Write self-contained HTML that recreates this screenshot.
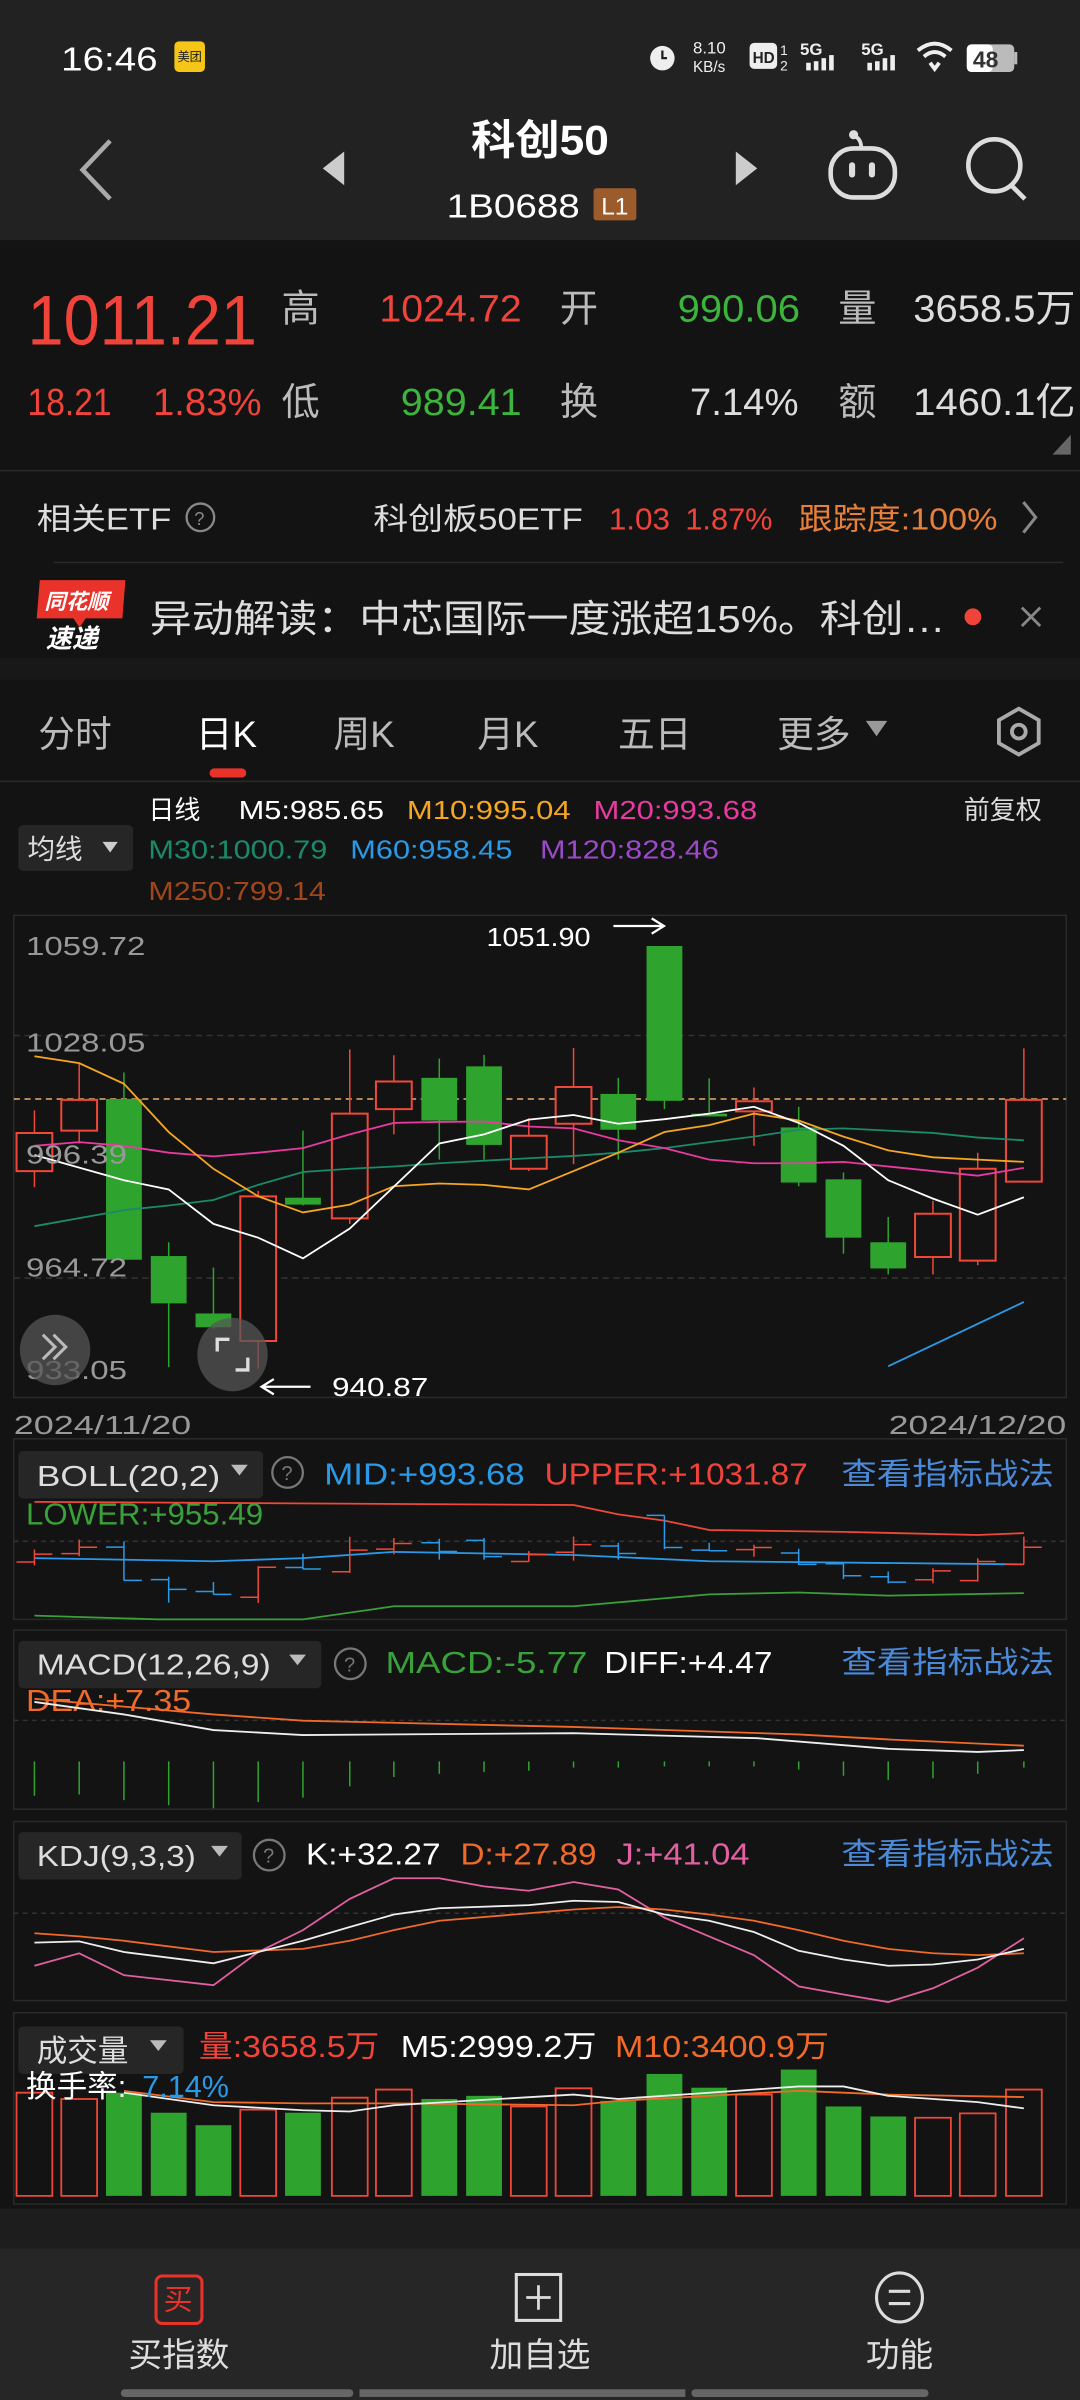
<!DOCTYPE html>
<html><head><meta charset="utf-8"><style>
html,body{margin:0;padding:0;background:#121212;}
svg{display:block}
text{font-family:"Liberation Sans","Noto Sans CJK SC",sans-serif;}
</style></head><body>
<svg width="1080" height="2400" viewBox="0 0 706 1568" preserveAspectRatio="none" xmlns="http://www.w3.org/2000/svg">
<rect x="0" y="0" width="706" height="157" fill="#222222"/>
<rect x="0" y="157" width="706" height="1290" fill="#131313"/>
<rect x="0" y="430" width="706" height="14" fill="#181818"/>
<rect x="0" y="1443" width="706" height="26" fill="#1d1d1d"/>
<rect x="0" y="1469" width="706" height="99" fill="#262626"/>

<text x="40" y="46" font-size="22" fill="#fff" textLength="63" lengthAdjust="spacingAndGlyphs">16:46</text>
<rect x="114" y="27" width="20" height="20" rx="3" fill="#f5c518"/>
<text x="116" y="40" font-size="8" fill="#222">美团</text>
<circle cx="433" cy="38" r="8" fill="#eee"/><path d="M433 33v5h3" stroke="#222" stroke-width="1.5" fill="none"/>
<text x="453" y="35" font-size="11" fill="#eee">8.10</text>
<text x="453" y="47" font-size="10" fill="#eee">KB/s</text>
<rect x="490" y="28" width="18" height="17" rx="3" fill="#eee"/><text x="492" y="41" font-size="10" fill="#222" font-weight="bold">HD</text>
<text x="510" y="36" font-size="9" fill="#eee">1</text><text x="510" y="46" font-size="9" fill="#eee">2</text>
<text x="523" y="36" font-size="11" fill="#eee" font-weight="bold">5G</text>
<g fill="#eee"><rect x="527" y="41" width="3" height="5"/><rect x="532" y="40" width="3" height="6"/><rect x="537" y="38" width="3" height="8"/><rect x="542" y="36" width="3" height="10"/></g>
<text x="563" y="36" font-size="11" fill="#eee" font-weight="bold">5G</text>
<g fill="#eee"><rect x="567" y="41" width="3" height="5"/><rect x="572" y="40" width="3" height="6"/><rect x="577" y="38" width="3" height="8"/><rect x="582" y="36" width="3" height="10"/></g>
<path d="M600 33 Q611 24 622 33 M604 37 Q611 31 618 37 M608 41 L611 45 L614 41" stroke="#eee" stroke-width="2.5" fill="none"/>
<rect x="632" y="29" width="31" height="18" rx="3" fill="#bbb"/><rect x="632" y="29" width="17" height="18" rx="3" fill="#fff"/><rect x="663" y="34" width="2" height="8" fill="#bbb"/>
<text x="636" y="44" font-size="15" fill="#333" font-weight="bold">48</text>

<path d="M72 92 L54 111 L72 130" stroke="#aaa" stroke-width="3" fill="none"/>
<path d="M225 99 L211 110 L225 121 Z" fill="#ccc"/>
<path d="M481 99 L495 110 L481 121 Z" fill="#ccc"/>
<text x="353" y="101" font-size="27" fill="#fff" text-anchor="middle" font-weight="bold" textLength="90" lengthAdjust="spacingAndGlyphs">科创50</text>
<text x="292" y="142" font-size="22" fill="#fff" textLength="87" lengthAdjust="spacingAndGlyphs">1B0688</text>
<rect x="388" y="123" width="28" height="21" rx="2" fill="#9c5b2a"/>
<text x="393" y="140" font-size="16" fill="#fff">L1</text>
<rect x="543" y="97" width="42" height="32" rx="15" fill="none" stroke="#ddd" stroke-width="3"/>
<rect x="555" y="106" width="4" height="10" rx="2" fill="#ddd"/><rect x="568" y="106" width="4" height="10" rx="2" fill="#ddd"/>
<path d="M563 97 Q563 91 559 89" stroke="#ddd" stroke-width="2.5" fill="none"/><circle cx="558" cy="88" r="3" fill="#ddd"/>
<circle cx="650" cy="108" r="17" fill="none" stroke="#ddd" stroke-width="3"/><path d="M661 121 L670 130" stroke="#ddd" stroke-width="3"/>

<text x="18" y="225" font-size="46" fill="#f0433a" textLength="150" lengthAdjust="spacingAndGlyphs">1011.21</text>
<g font-size="25">
<text x="184" y="210" fill="#bbb">高</text>
<text x="248" y="210" fill="#f0433a" textLength="93" lengthAdjust="spacingAndGlyphs">1024.72</text>
<text x="366" y="210" fill="#bbb">开</text>
<text x="443" y="210" fill="#3cb53c" textLength="80" lengthAdjust="spacingAndGlyphs">990.06</text>
<text x="548" y="210" fill="#bbb">量</text>
<text x="597" y="210" fill="#ddd" textLength="106" lengthAdjust="spacingAndGlyphs">3658.5万</text>
<text x="18" y="271" fill="#f0433a" textLength="55" lengthAdjust="spacingAndGlyphs">18.21</text>
<text x="100" y="271" fill="#f0433a" textLength="71" lengthAdjust="spacingAndGlyphs">1.83%</text>
<text x="184" y="271" fill="#bbb">低</text>
<text x="262" y="271" fill="#3cb53c" textLength="79" lengthAdjust="spacingAndGlyphs">989.41</text>
<text x="366" y="271" fill="#bbb">换</text>
<text x="451" y="271" fill="#ddd" textLength="71" lengthAdjust="spacingAndGlyphs">7.14%</text>
<text x="548" y="271" fill="#bbb">额</text>
<text x="597" y="271" fill="#ddd" textLength="106" lengthAdjust="spacingAndGlyphs">1460.1亿</text>
</g>
<path d="M700 284 L700 297 L688 297 Z" fill="#666"/>
<rect x="0" y="307" width="706" height="1" fill="#2a2a2a"/>
<text x="24" y="346" font-size="20" fill="#ddd" textLength="88" lengthAdjust="spacingAndGlyphs">相关ETF</text>
<circle cx="131" cy="338" r="9" fill="none" stroke="#888" stroke-width="1.5"/><text x="127" y="343" font-size="12" fill="#888">?</text>
<text x="244" y="346" font-size="20" fill="#ddd" textLength="137" lengthAdjust="spacingAndGlyphs">科创板50ETF</text>
<text x="398" y="346" font-size="20" fill="#f0433a" textLength="40" lengthAdjust="spacingAndGlyphs">1.03</text>
<text x="448" y="346" font-size="20" fill="#f0433a" textLength="57" lengthAdjust="spacingAndGlyphs">1.87%</text>
<text x="522" y="346" font-size="20" fill="#e6803a" textLength="130" lengthAdjust="spacingAndGlyphs">跟踪度:100%</text>
<path d="M669 328 L677 338 L669 348" stroke="#888" stroke-width="2" fill="none"/>
<rect x="35" y="367" width="660" height="1" fill="#2a2a2a"/>
<path d="M26 379 L82 379 L80 404 L56 404 L52 410 L48 404 L24 404 Z" fill="#e8322a"/>
<text x="29" y="398" font-size="14" fill="#fff" font-style="italic" font-weight="bold">同花顺</text>
<text x="30" y="423" font-size="17" fill="#fff" font-style="italic" font-weight="bold">速递</text>
<text x="98" y="413" font-size="25" fill="#ddd" textLength="520" lengthAdjust="spacingAndGlyphs">异动解读：中芯国际一度涨超15%。科创…</text>
<circle cx="636" cy="403" r="5.5" fill="#f0433a"/>
<path d="M668 397 L680 409 M680 397 L668 409" stroke="#888" stroke-width="1.8"/>

<g font-size="24" fill="#bbb">
<text x="25" y="488">分时</text>
<text x="128" y="488" fill="#fff">日K</text>
<text x="218" y="488">周K</text>
<text x="312" y="488">月K</text>
<text x="404" y="488">五日</text>
<text x="508" y="488">更多</text>
</g>
<path d="M566 471 L580 471 L573 481 Z" fill="#999"/>
<rect x="137" y="502" width="24" height="6" rx="3" fill="#e8322a"/>
<path d="M666 463 L679 470.5 L679 485.5 L666 493 L653 485.5 L653 470.5 Z" fill="none" stroke="#aaa" stroke-width="2.5"/>
<circle cx="666" cy="478" r="4.5" fill="none" stroke="#aaa" stroke-width="2.5"/>
<rect x="0" y="510" width="706" height="1" fill="#2a2a2a"/>

<g font-size="17">
<text x="97" y="535" fill="#fff">日线</text>
<text x="156" y="535" fill="#fff" textLength="95" lengthAdjust="spacingAndGlyphs">M5:985.65</text>
<text x="266" y="535" fill="#f5a623" textLength="107" lengthAdjust="spacingAndGlyphs">M10:995.04</text>
<text x="388" y="535" fill="#e83aa0" textLength="107" lengthAdjust="spacingAndGlyphs">M20:993.68</text>
<text x="630" y="535" fill="#ddd">前复权</text>
<text x="97" y="561" fill="#1a8a6a" textLength="117" lengthAdjust="spacingAndGlyphs">M30:1000.79</text>
<text x="229" y="561" fill="#2a9ae8" textLength="106" lengthAdjust="spacingAndGlyphs">M60:958.45</text>
<text x="353" y="561" fill="#9a4ac8" textLength="117" lengthAdjust="spacingAndGlyphs">M120:828.46</text>
<text x="97" y="588" fill="#a0461a" textLength="116" lengthAdjust="spacingAndGlyphs">M250:799.14</text>
</g>
<rect x="12" y="539" width="75" height="30" rx="3" fill="#262626"/>
<text x="18" y="561" font-size="18" fill="#ddd">均线</text>
<path d="M67 550 L77 550 L72 557 Z" fill="#ccc"/>

<rect x="9" y="598" width="688" height="315" fill="none" stroke="#2a2a2a" stroke-width="1"/>
<line x1="9" y1="676.5" x2="697" y2="676.5" stroke="#333" stroke-dasharray="4 3"/>
<line x1="9" y1="835" x2="697" y2="835" stroke="#333" stroke-dasharray="4 3"/>
<line x1="9" y1="718" x2="697" y2="718" stroke="#e8b070" stroke-dasharray="4 3" stroke-width="1"/>
<g transform="matrix(0.4501 0 0 0.3001 0 457.5)">
<g stroke="#f04838" stroke-width="1.5">
<line x1="50" y1="893" x2="50" y2="1060" vector-effect="non-scaling-stroke"/>
<line x1="115" y1="790" x2="115" y2="965" vector-effect="non-scaling-stroke"/>
<line x1="375" y1="1068" x2="375" y2="1455" vector-effect="non-scaling-stroke"/>
<line x1="508" y1="760" x2="508" y2="1140" vector-effect="non-scaling-stroke"/>
<line x1="572" y1="773" x2="572" y2="945" vector-effect="non-scaling-stroke"/>
<line x1="768" y1="910" x2="768" y2="1025" vector-effect="non-scaling-stroke"/>
<line x1="833" y1="757" x2="833" y2="1010" vector-effect="non-scaling-stroke"/>
<line x1="1095" y1="843" x2="1095" y2="970" vector-effect="non-scaling-stroke"/>
<line x1="1355" y1="1090" x2="1355" y2="1250" vector-effect="non-scaling-stroke"/>
<line x1="1420" y1="985" x2="1420" y2="1230" vector-effect="non-scaling-stroke"/>
<line x1="1487" y1="758" x2="1487" y2="1050" vector-effect="non-scaling-stroke"/>
</g>
<g stroke="#2ea32e" stroke-width="1.5">
<line x1="180" y1="810" x2="180" y2="1220" vector-effect="non-scaling-stroke"/>
<line x1="245" y1="1180" x2="245" y2="1452" vector-effect="non-scaling-stroke"/>
<line x1="310" y1="1235" x2="310" y2="1368" vector-effect="non-scaling-stroke"/>
<line x1="440" y1="937" x2="440" y2="1100" vector-effect="non-scaling-stroke"/>
<line x1="638" y1="780" x2="638" y2="1000" vector-effect="non-scaling-stroke"/>
<line x1="703" y1="772" x2="703" y2="1000" vector-effect="non-scaling-stroke"/>
<line x1="898" y1="822" x2="898" y2="1000" vector-effect="non-scaling-stroke"/>
<line x1="965" y1="535" x2="965" y2="890" vector-effect="non-scaling-stroke"/>
<line x1="1030" y1="823" x2="1030" y2="906" vector-effect="non-scaling-stroke"/>
<line x1="1160" y1="885" x2="1160" y2="1058" vector-effect="non-scaling-stroke"/>
<line x1="1225" y1="1028" x2="1225" y2="1205" vector-effect="non-scaling-stroke"/>
<line x1="1290" y1="1125" x2="1290" y2="1250" vector-effect="non-scaling-stroke"/>
</g>
<g fill="#131313" stroke="#f04838" stroke-width="2">
<rect x="24" y="942" width="52" height="83" vector-effect="non-scaling-stroke"/>
<rect x="89" y="870" width="52" height="67" vector-effect="non-scaling-stroke"/>
<rect x="349" y="1080" width="52" height="315" vector-effect="non-scaling-stroke"/>
<rect x="482" y="900" width="52" height="228" vector-effect="non-scaling-stroke"/>
<rect x="546" y="830" width="52" height="60" vector-effect="non-scaling-stroke"/>
<rect x="742" y="948" width="52" height="72" vector-effect="non-scaling-stroke"/>
<rect x="807" y="842" width="52" height="80" vector-effect="non-scaling-stroke"/>
<rect x="1069" y="873" width="52" height="22" vector-effect="non-scaling-stroke"/>
<rect x="1329" y="1118" width="52" height="94" vector-effect="non-scaling-stroke"/>
<rect x="1394" y="1020" width="52" height="200" vector-effect="non-scaling-stroke"/>
<rect x="1461" y="870" width="52" height="178" vector-effect="non-scaling-stroke"/>
</g>
<g fill="#2ea32e">
<rect x="154" y="868" width="52" height="350"/>
<rect x="219" y="1210" width="52" height="103"/>
<rect x="284" y="1335" width="52" height="30"/>
<rect x="414" y="1083" width="52" height="15"/>
<rect x="612" y="822" width="52" height="93"/>
<rect x="677" y="797" width="52" height="171"/>
<rect x="872" y="857" width="52" height="78"/>
<rect x="939" y="535" width="52" height="337"/>
<rect x="1004" y="900" width="52" height="6"/>
<rect x="1134" y="930" width="52" height="120"/>
<rect x="1199" y="1043" width="52" height="127"/>
<rect x="1264" y="1180" width="52" height="57"/>
</g>
<g fill="none" stroke-width="1.8">
<polyline vector-effect="non-scaling-stroke" stroke="#1a8a6a" points="50,1145 180,1110 245,1100 310,1088 375,1055 440,1027 508,1020 572,1015 638,1008 768,997 833,992 898,985 965,975 1030,962 1095,950 1160,935 1225,932 1290,937 1355,942 1420,952 1487,958"/>
<polyline vector-effect="non-scaling-stroke" stroke="#e83aa0" points="50,970 115,962 180,970 245,985 310,993 375,985 440,975 508,945 572,920 638,918 703,917 768,928 833,932 898,958 965,975 1030,1000 1095,1008 1160,1008 1225,1005 1290,1015 1355,1025 1420,1035 1487,1018"/>
<polyline vector-effect="non-scaling-stroke" stroke="#f5a623" points="50,775 115,790 180,835 245,940 310,1020 375,1080 440,1115 508,1098 572,1058 638,1052 703,1055 768,1065 833,1025 898,985 965,940 1030,925 1095,900 1160,915 1225,950 1290,980 1355,995 1420,1000 1487,1005"/>
<polyline vector-effect="non-scaling-stroke" stroke="#ffffff" points="50,990 180,1045 245,1065 310,1140 375,1170 440,1215 508,1150 638,965 703,945 768,913 833,903 898,922 965,912 1030,900 1095,885 1160,920 1225,970 1290,1045 1355,1085 1420,1120 1487,1082"/>
<polyline vector-effect="non-scaling-stroke" stroke="#2a9ae8" points="1290,1450 1487,1310"/>
</g>
</g>
<g font-size="17" fill="#999">
<text x="17" y="624" textLength="78" lengthAdjust="spacingAndGlyphs">1059.72</text>
<text x="17" y="687" textLength="78" lengthAdjust="spacingAndGlyphs">1028.05</text>
<text x="17" y="760" textLength="66" lengthAdjust="spacingAndGlyphs">996.39</text>
<text x="17" y="834" textLength="66" lengthAdjust="spacingAndGlyphs">964.72</text>
<text x="17" y="901" textLength="66" lengthAdjust="spacingAndGlyphs">933.05</text>
</g>
<text x="318" y="618" font-size="17" fill="#fff" textLength="68" lengthAdjust="spacingAndGlyphs">1051.90</text>
<path d="M401 605 L434 605 M426 600 L434 605 L426 610" stroke="#fff" stroke-width="1.5" fill="none"/>
<path d="M203 906 L171 906 M179 901 L171 906 L179 911" stroke="#fff" stroke-width="1.5" fill="none"/>
<text x="217" y="912" font-size="17" fill="#fff" textLength="63" lengthAdjust="spacingAndGlyphs">940.87</text>
<circle cx="36" cy="882" r="23" fill="#555" fill-opacity="0.75"/>
<path d="M28 872 L36 880 L28 888 M35 872 L43 880 L35 888" stroke="#bbb" stroke-width="2" fill="none"/>
<ellipse cx="152" cy="885" rx="23" ry="24" fill="#555" fill-opacity="0.75"/>
<path d="M142 883 L142 875 L150 875 M162 887 L162 895 L154 895" stroke="#ddd" stroke-width="2.2" fill="none"/>
<text x="9" y="937" font-size="17" fill="#999" textLength="116" lengthAdjust="spacingAndGlyphs">2024/11/20</text>
<text x="581" y="937" font-size="17" fill="#999" textLength="116" lengthAdjust="spacingAndGlyphs">2024/12/20</text>

<rect x="9" y="940" width="688" height="118" fill="none" stroke="#2a2a2a"/>
<line x1="9" y1="1007" x2="697" y2="1007" stroke="#333" stroke-dasharray="3 3"/>
<rect x="12" y="948" width="160" height="31" rx="3" fill="#262626"/>
<text x="24" y="971" font-size="19" fill="#ddd" textLength="120" lengthAdjust="spacingAndGlyphs">BOLL(20,2)</text>
<path d="M151 957 L162 957 L156.5 964 Z" fill="#bbb"/>
<circle cx="188" cy="962" r="10" fill="none" stroke="#777" stroke-width="1.5"/><text x="184" y="967" font-size="13" fill="#777">?</text>
<g font-size="20">
<text x="212" y="970" fill="#2a9ae8" textLength="131" lengthAdjust="spacingAndGlyphs">MID:+993.68</text>
<text x="356" y="970" fill="#f0433a" textLength="172" lengthAdjust="spacingAndGlyphs">UPPER:+1031.87</text>
<text x="550" y="970" fill="#4a8ad8" textLength="139" lengthAdjust="spacingAndGlyphs">查看指标战法</text>
<text x="17" y="996" fill="#3aa03a" textLength="155" lengthAdjust="spacingAndGlyphs">LOWER:+955.49</text>
</g>
<g transform="matrix(0.4501 0 0 0.4085 0 928.1)" fill="none" stroke-width="1.8">
<polyline vector-effect="non-scaling-stroke" stroke="#f04838" points="50,130 833,135 898,150 965,160 1030,175 1225,178 1420,183 1487,180"/>
<polyline vector-effect="non-scaling-stroke" stroke="#2a9ae8" points="50,220 310,225 440,220 572,210 833,215 1030,225 1487,230"/>
<polyline vector-effect="non-scaling-stroke" stroke="#3aa03a" points="50,312 230,318 440,318 572,297 833,297 1030,278 1160,275 1290,280 1487,276"/>
</g>
<g transform="matrix(0.4501 0 0 0.06216 0 956.8)" fill="none" stroke-width="1.5">
<path vector-effect="non-scaling-stroke" stroke="#f04838" d="M50 893V1060M24 1025H50M50 942H76 M115 790V965M89 937H115M115 870H141 M375 1068V1455M349 1395H375M375 1080H401 M508 760V1140M482 1128H508M508 900H534 M572 773V945M546 890H572M572 830H598 M768 910V1025M742 1020H768M768 948H794 M833 757V1010M807 922H833M833 842H859 M1095 843V970M1069 895H1095M1095 873H1121 M1355 1090V1250M1329 1212H1355M1355 1118H1381 M1420 985V1230M1394 1220H1420M1420 1020H1446 M1487 758V1050M1461 1048H1487M1487 870H1513"/>
<path vector-effect="non-scaling-stroke" stroke="#2a9ae8" d="M180 810V1220M154 868H180M180 1218H206 M245 1180V1452M219 1210H245M245 1313H271 M310 1235V1368M284 1335H310M310 1365H336 M440 937V1100M414 1083H440M440 1098H466 M638 780V1000M612 822H638M638 915H664 M703 772V1000M677 797H703M703 968H729 M898 822V1000M872 857H898M898 935H924 M965 535V890M939 535H965M965 872H991 M1030 823V906M1004 900H1030M1030 906H1056 M1160 885V1058M1134 930H1160M1160 1050H1186 M1225 1028V1205M1199 1043H1225M1225 1170H1251 M1290 1125V1250M1264 1180H1290M1290 1237H1316"/>
</g>

<rect x="9" y="1065" width="688" height="117" fill="none" stroke="#2a2a2a"/>
<line x1="9" y1="1124" x2="697" y2="1124" stroke="#333" stroke-dasharray="3 3"/>
<rect x="12" y="1072" width="198" height="31" rx="3" fill="#262626"/>
<text x="24" y="1094" font-size="19" fill="#ddd" textLength="153" lengthAdjust="spacingAndGlyphs">MACD(12,26,9)</text>
<path d="M189 1081 L200 1081 L194.5 1088 Z" fill="#bbb"/>
<circle cx="229" cy="1087" r="10" fill="none" stroke="#777" stroke-width="1.5"/><text x="225" y="1092" font-size="13" fill="#777">?</text>
<g font-size="20">
<text x="252" y="1093" fill="#3aa03a" textLength="132" lengthAdjust="spacingAndGlyphs">MACD:-5.77</text>
<text x="395" y="1093" fill="#fff" textLength="110" lengthAdjust="spacingAndGlyphs">DIFF:+4.47</text>
<text x="550" y="1093" fill="#4a8ad8" textLength="139" lengthAdjust="spacingAndGlyphs">查看指标战法</text>
<text x="17" y="1118" fill="#f06a2a" textLength="108" lengthAdjust="spacingAndGlyphs">DEA:+7.35</text>
</g>
<g transform="matrix(0.4501 0 0 0.4085 0 928.1)" fill="none" stroke-width="1.8">
<polyline vector-effect="non-scaling-stroke" stroke="#f06a2a" points="50,445 310,470 440,480 833,490 1160,502 1290,510 1487,520"/>
<polyline vector-effect="non-scaling-stroke" stroke="#eeeeee" points="50,450 180,470 310,495 440,503 833,500 1100,508 1290,525 1420,530 1487,527"/>
<path vector-effect="non-scaling-stroke" stroke="#2ea32e" stroke-width="1.5" d="M50 545V600M115 545V598M180 545V607M245 545V615M310 545V620M375 545V610M440 545V603M508 545V585M572 545V570M638 545V565M703 545V562M768 545V560M833 545V555M898 545V555M965 545V553M1030 545V553M1095 545V553M1160 545V558M1225 545V568M1290 545V575M1355 545V572M1420 545V565M1487 545V555"/>
</g>

<rect x="9" y="1190" width="688" height="117" fill="none" stroke="#2a2a2a"/>
<line x1="9" y1="1250" x2="697" y2="1250" stroke="#333" stroke-dasharray="3 3"/>
<rect x="12" y="1197" width="146" height="31" rx="3" fill="#262626"/>
<text x="24" y="1219" font-size="19" fill="#ddd" textLength="104" lengthAdjust="spacingAndGlyphs">KDJ(9,3,3)</text>
<path d="M138 1206 L149 1206 L143.5 1213 Z" fill="#bbb"/>
<circle cx="176" cy="1212" r="10" fill="none" stroke="#777" stroke-width="1.5"/><text x="172" y="1217" font-size="13" fill="#777">?</text>
<g font-size="20">
<text x="200" y="1218" fill="#fff" textLength="88" lengthAdjust="spacingAndGlyphs">K:+32.27</text>
<text x="301" y="1218" fill="#f06a2a" textLength="89" lengthAdjust="spacingAndGlyphs">D:+27.89</text>
<text x="403" y="1218" fill="#e060a0" textLength="87" lengthAdjust="spacingAndGlyphs">J:+41.04</text>
<text x="550" y="1218" fill="#4a8ad8" textLength="139" lengthAdjust="spacingAndGlyphs">查看指标战法</text>
</g>
<g transform="matrix(0.4501 0 0 0.4085 0 928.1)" fill="none" stroke-width="1.8">
<polyline vector-effect="non-scaling-stroke" stroke="#e060a0" points="50,872 115,852 180,887 310,903 375,850 440,815 508,765 572,732 638,732 703,745 768,752 833,738 898,750 965,795 1030,825 1095,855 1160,905 1225,918 1290,930 1355,908 1420,875 1487,828"/>
<polyline vector-effect="non-scaling-stroke" stroke="#f06a2a" points="50,820 115,825 180,832 310,850 440,845 508,832 572,815 638,800 768,788 833,782 898,778 965,782 1030,790 1095,800 1160,815 1225,832 1290,845 1355,852 1420,855 1487,852"/>
<polyline vector-effect="non-scaling-stroke" stroke="#eeeeee" points="50,835 115,833 180,850 310,868 375,850 440,832 508,810 572,790 638,780 768,775 833,768 898,770 965,790 1030,800 1095,818 1160,848 1225,862 1290,872 1355,870 1420,862 1487,845"/>
</g>

<rect x="9" y="1315" width="688" height="125" fill="none" stroke="#2a2a2a"/>
<g transform="matrix(0.4501 0 0 0.4085 0 928.1)">
<g fill="#2ea32e">
<rect x="154" y="1075" width="52" height="165"/><rect x="219" y="1107" width="52" height="133"/><rect x="284" y="1127" width="52" height="113"/>
<rect x="414" y="1107" width="52" height="133"/><rect x="612" y="1085" width="52" height="155"/><rect x="677" y="1080" width="52" height="160"/>
<rect x="872" y="1088" width="52" height="152"/><rect x="939" y="1045" width="52" height="195"/><rect x="1004" y="1067" width="52" height="173"/>
<rect x="1134" y="1038" width="52" height="202"/><rect x="1199" y="1097" width="52" height="143"/><rect x="1264" y="1113" width="52" height="127"/>
</g>
<g fill="none" stroke="#f04838" stroke-width="1.8">
<rect vector-effect="non-scaling-stroke" x="24" y="1075" width="52" height="165"/><rect vector-effect="non-scaling-stroke" x="89" y="1085" width="52" height="155"/>
<rect vector-effect="non-scaling-stroke" x="349" y="1102" width="52" height="138"/><rect vector-effect="non-scaling-stroke" x="482" y="1083" width="52" height="157"/>
<rect vector-effect="non-scaling-stroke" x="546" y="1070" width="52" height="170"/><rect vector-effect="non-scaling-stroke" x="742" y="1097" width="52" height="143"/>
<rect vector-effect="non-scaling-stroke" x="807" y="1068" width="52" height="172"/><rect vector-effect="non-scaling-stroke" x="1069" y="1078" width="52" height="162"/>
<rect vector-effect="non-scaling-stroke" x="1329" y="1115" width="52" height="125"/><rect vector-effect="non-scaling-stroke" x="1394" y="1108" width="52" height="132"/>
<rect vector-effect="non-scaling-stroke" x="1461" y="1070" width="52" height="170"/>
<polyline vector-effect="non-scaling-stroke" stroke="#f06a2a" points="180,1072 310,1090 440,1092 572,1092 833,1095 898,1088 1030,1080 1160,1072 1225,1075 1290,1078 1487,1082"/>
<polyline vector-effect="non-scaling-stroke" stroke="#eeeeee" points="180,1075 310,1095 440,1103 508,1105 572,1095 833,1078 898,1085 1030,1075 1160,1065 1225,1065 1290,1080 1420,1090 1487,1100"/>
</g>
</g>
<rect x="12" y="1324" width="108" height="31" rx="3" fill="#262626"/>
<text x="24" y="1347" font-size="20" fill="#ddd">成交量</text>
<path d="M98 1333 L109 1333 L103.5 1340 Z" fill="#bbb"/>
<g font-size="20">
<text x="130" y="1344" fill="#f0433a" textLength="118" lengthAdjust="spacingAndGlyphs">量:3658.5万</text>
<text x="262" y="1344" fill="#fff" textLength="128" lengthAdjust="spacingAndGlyphs">M5:2999.2万</text>
<text x="402" y="1344" fill="#f06a2a" textLength="140" lengthAdjust="spacingAndGlyphs">M10:3400.9万</text>
<text x="17" y="1370" fill="#fff">换手率:</text>
<text x="93" y="1370" fill="#2a9ae8">7.14%</text>
</g>

<rect x="102" y="1487" width="30" height="31" rx="4" fill="none" stroke="#e8322a" stroke-width="2"/>
<text x="107" y="1509" font-size="19" fill="#e8322a">买</text>
<rect x="337.5" y="1486" width="29" height="30" fill="none" stroke="#ddd" stroke-width="2"/>
<path d="M352 1493 V1509 M344 1501 H360" stroke="#ddd" stroke-width="1.8"/>
<ellipse cx="588" cy="1501" rx="15" ry="16" fill="none" stroke="#ddd" stroke-width="2"/>
<path d="M581 1497 H595 M581 1505 H595" stroke="#ddd" stroke-width="2"/>
<g font-size="22" fill="#ddd" text-anchor="middle">
<text x="117" y="1546">买指数</text>
<text x="353" y="1546">加自选</text>
<text x="588" y="1546">功能</text>
</g>
<g fill="#666">
<rect x="79" y="1561" width="152" height="5" rx="2.5"/>
<rect x="235" y="1561" width="213" height="5"/>
<rect x="452" y="1561" width="155" height="5" rx="2.5"/>
</g>
</svg>
</body></html>
